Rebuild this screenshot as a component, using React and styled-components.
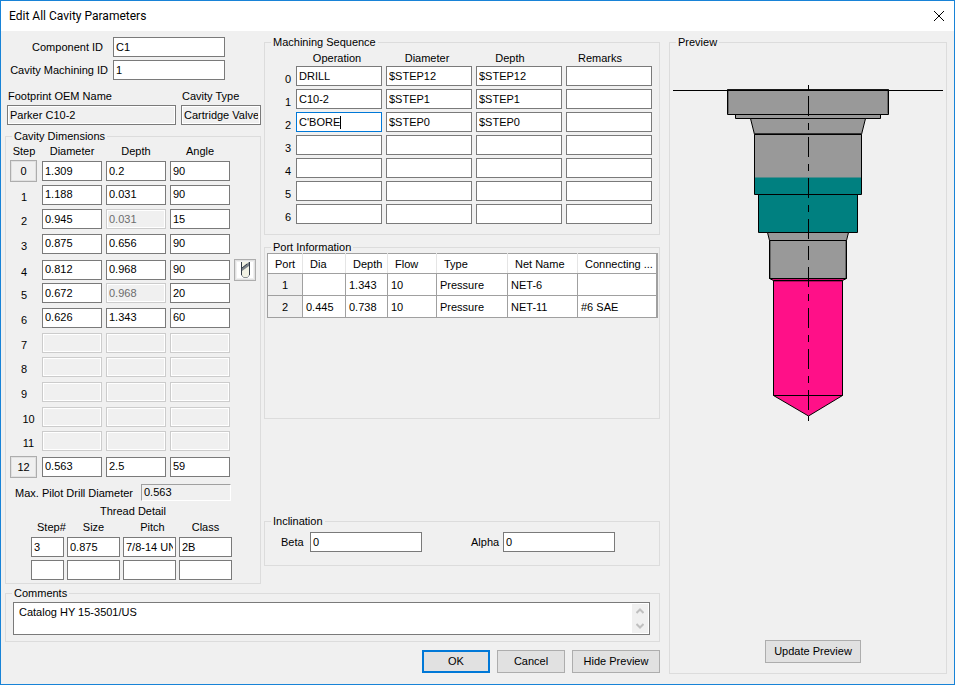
import React, { useEffect, useRef } from "react";
import styled, { createGlobalStyle } from "styled-components";

const GlobalStyle = createGlobalStyle`
  * {
    box-sizing: border-box;
  }

  body {
    margin: 0;
    background: #f0f0f0;
    color: #000;
    font-family: "Liberation Sans", Arial, sans-serif;
    font-size: 11px;
    line-height: 14px;
  }

  input,
  button,
  textarea {
    font: inherit;
    color: inherit;
    margin: 0;
  }
`;

const Dialog = styled.form`
  display: flex;
  flex-direction: column;
  min-height: 100vh;
  border: 1px solid #1883d7;
`;

const TitleBar = styled.header`
  display: flex;
  align-items: center;
  justify-content: space-between;
  height: 30px;
  padding: 0 9px 0 8px;
  background: #fff;
`;

const Title = styled.h1`
  margin: 0;
  font-family: Roboto, "Noto Sans", sans-serif;
  font-size: 12px;
  font-weight: 400;
`;

const CloseButton = styled.button`
  display: flex;
  padding: 0;
  border: 0;
  background: none;
`;

const Body = styled.div`
  display: grid;
  grid-template-columns: minmax(0, 655fr) minmax(0, 278fr);
  flex: 1;
  align-items: start;
  gap: 9px;
  padding: 5px 7px 10px 4px;
`;

const Main = styled.main`
  display: flex;
  flex-direction: column;
  min-width: 0;
`;

const Columns = styled.div`
  display: grid;
  grid-template-columns: 256px minmax(0, 1fr);
  gap: 3px;
`;

const Column = styled.div`
  display: flex;
  flex-direction: column;
  min-width: 0;
`;

const Group = styled.fieldset`
  min-width: 0;
  margin: 0;
  padding: 0;
  border: 1px solid #dcdcdc;
`;

const Legend = styled.legend`
  margin-left: 6px;
  padding: 0 2px;
  line-height: 12px;
`;

const TextBox = styled.input`
  width: 100%;
  min-width: 0;
  height: 20px;
  padding: 0 2px 1px;
  border: 1px solid #7a7a7a;
  border-radius: 0;
  background: #fff;
  outline: none;

  &:focus {
    border-color: #0078d7;
  }

  &:read-only {
    background: #f0f0f0;
    box-shadow: inset 0 0 0 1px #fff;
  }

  &:disabled {
    border-color: #ccc;
    background: #f0f0f0;
    color: #6d6d6d;
    box-shadow: inset 0 0 0 1px #fff;
  }
`;

const IdFields = styled.div`
  display: grid;
  grid-template-columns: 104px 112px;
  gap: 3px 4px;
  padding-top: 1px;
  align-items: center;
`;

const IdLabel = styled.label`
  padding-right: ${(props) => (props.$inset ? "6px" : "1px")};
  text-align: right;
`;

const NameFields = styled.div`
  display: grid;
  grid-template-columns: 169px 80px;
  gap: 2px 5px;
  padding: 9px 0 5px 2px;
`;

const NameLabel = styled.label`
  padding-left: 1px;
`;

const StepHeads = styled.div`
  display: grid;
  grid-template-columns: 28px 60px 60px 60px;
  gap: 4px;
  padding: 2px 0 2px 4px;
  text-align: center;
`;

const StepRows = styled.div`
  display: flex;
  flex-direction: column;
  justify-content: space-between;
  height: 316px;
  padding-left: 4px;
`;

const StepRow = styled.div`
  display: grid;
  grid-template-columns: 28px 60px 60px 60px 22px;
  gap: 4px;
  align-items: center;
  height: 20px;
`;

const StepNumber = styled.span`
  padding: 4px 0 0 ${(props) => (props.$wide ? "9px" : "0")};
  text-align: center;
`;

const StepButton = styled.button`
  width: 27px;
  height: 22px;
  padding: 0;
  border: 1px solid #adadad;
  background: #f0f0f0;
  box-shadow: inset 0 0 0 1px #e1e1e1;
`;

const ToolButton = styled(StepButton)`
  display: flex;
  align-items: center;
  justify-content: center;
  width: 22px;
`;

const PilotRow = styled.div`
  display: flex;
  align-items: center;
  justify-content: space-between;
  padding: 8px 29px 3px 9px;
`;

const PilotValue = styled.output`
  width: 90px;
  height: 17px;
  padding-left: 2px;
  border: 1px solid;
  border-color: #a0a0a0 #fff #fff #a0a0a0;
`;

const ThreadTitle = styled.div`
  padding-bottom: 3px;
  text-align: center;
`;

const ThreadGrid = styled.div`
  display: grid;
  grid-template-columns: 33px 53px 53px 53px;
  gap: 3px;
  padding: 0 25px 3px;
`;

const ThreadHead = styled.div`
  padding-left: ${(props) => (props.$indent ? "6px" : "0")};
  line-height: 13px;
  text-align: center;
`;

const SequenceGrid = styled.div`
  display: grid;
  grid-template-columns: 26px repeat(4, minmax(0, 1fr));
  gap: 3px 4px;
  padding: 3px 7px 10px 1px;
  text-align: center;
`;

const SequenceHead = styled.div`
  height: 12px;
  padding-right: ${(props) => (props.$trail ? "18px" : "4px")};
`;

const SequenceNumber = styled.div`
  padding: 6px 1px 0 0;
  text-align: right;
`;

const ActiveCell = styled.div`
  position: relative;

  input {
    display: block;
    caret-color: transparent;
  }
`;

const Caret = styled.span`
  position: absolute;
  top: 4px;
  left: 44px;
  width: 1px;
  height: 13px;
  background: #000;
`;

const PortGroup = styled(Group)`
  min-height: 178px;
  margin-top: 6px;
`;

const PortTableBox = styled.div`
  padding: 0 1px 0 2px;
`;

const PortTable = styled.table`
  width: 100%;
  table-layout: fixed;
  border-collapse: collapse;
  border: 1px solid #a0a0a0;
  border-right-width: 2px;
  background: #fff;
`;

const PortHead = styled.th`
  height: 20px;
  padding: 0 0 0 7px;
  border-bottom: 1px solid #a0a0a0;
  border-right: 1px solid #e5e5e5;
  font-weight: 400;
  text-align: left;
  white-space: nowrap;
`;

const PortCell = styled.td`
  height: 22px;
  padding: 0 3px;
  border: 1px solid #a0a0a0;
  white-space: nowrap;
`;

const PortNumber = styled(PortCell)`
  background: #f0f0f0;
  text-align: center;
`;

const InclinationGroup = styled(Group)`
  margin-top: auto;
  margin-bottom: 18px;
`;

const InclinationFields = styled.div`
  display: grid;
  grid-template-columns: 25px 112px 41px 28px 112px;
  column-gap: 4px;
  align-items: center;
  padding: 5px 16px 13px;
`;

const AlphaLabel = styled.label`
  grid-column: 4;
`;

const CommentsGroup = styled(Group)`
  margin-top: 3px;
`;

const CommentsBox = styled.div`
  display: flex;
  height: 33px;
  margin: 3px 9px 6px 7px;
  padding: 1px;
  border: 1px solid #7a7a7a;
  background: #fff;
`;

const CommentsText = styled.textarea`
  flex: 1;
  padding: 1px 4px;
  border: 0;
  outline: none;
  resize: none;
  overflow: hidden;
  background: #fff;
`;

const ScrollArrows = styled.div`
  display: flex;
  flex-direction: column;
  width: 16px;
  background: #f0f0f0;
`;

const ScrollArrow = styled.button`
  display: flex;
  flex: 1;
  align-items: center;
  justify-content: center;
  padding: 0;
  border: 0;
  background: none;
`;

const Actions = styled.footer`
  display: flex;
  justify-content: flex-end;
  gap: 7px;
  padding-top: 8px;
`;

const Button = styled.button`
  width: ${(props) => props.$width || "68px"};
  height: 23px;
  padding: 0 0 2px;
  border: ${(props) => (props.$primary ? "2px solid #0078d7" : "1px solid #adadad")};
  background: #e1e1e1;
`;

const PreviewGroup = styled(Group)`
  display: flex;
  flex-direction: column;
  align-self: stretch;
`;

const Drawing = styled.svg`
  display: block;
  width: 100%;
  padding: 32px 3px 0;
`;

const PreviewActions = styled.div`
  display: flex;
  justify-content: center;
  margin-top: auto;
  padding: 0 0 10px 10px;
`;

const steps = [
  { diameter: "1.309", depth: "0.2", angle: "90", button: true },
  { diameter: "1.188", depth: "0.031", angle: "90" },
  { diameter: "0.945", depth: "0.031", angle: "15", depthLocked: true },
  { diameter: "0.875", depth: "0.656", angle: "90" },
  { diameter: "0.812", depth: "0.968", angle: "90", tool: true },
  { diameter: "0.672", depth: "0.968", angle: "20", depthLocked: true },
  { diameter: "0.626", depth: "1.343", angle: "60" },
  { unused: true },
  { unused: true },
  { unused: true },
  { unused: true },
  { unused: true },
  { diameter: "0.563", depth: "2.5", angle: "59", button: true },
];

const threads = [
  ["3", "0.875", "7/8-14 UNF", "2B"],
  ["", "", "", ""],
];
const threadHeads = ["Step#", "Size", "Pitch", "Class"];

const sequenceHeads = ["Operation", "Diameter", "Depth", "Remarks"];
const sequence = [
  ["DRILL", "$STEP12", "$STEP12", ""],
  ["C10-2", "$STEP1", "$STEP1", ""],
  ["C'BORE", "$STEP0", "$STEP0", ""],
  ["", "", "", ""],
  ["", "", "", ""],
  ["", "", "", ""],
  ["", "", "", ""],
];

const portHeads = ["Port", "Dia", "Depth", "Flow", "Type", "Net Name", "Connecting ..."];
const portWidths = [35, 43, 42, 49, 71, 70, undefined];
const ports = [
  ["1", "", "1.343", "10", "Pressure", "NET-6", ""],
  ["2", "0.445", "0.738", "10", "Pressure", "NET-11", "#6 SAE"],
];

const CavityDrawing = () => (
  <Drawing viewBox="673 80 270 345" role="img" aria-label="Cavity section">
    <g stroke="#000" fill="#999">
      <path d="M727.5 89.5H888.5V114.5H727.5Z" />
      <path d="M728.5 91V113.5M887.5 91V113.5M728 89.5H888" stroke="#333" strokeOpacity="0.5" />
      <path d="M735.5 114.5H880.5V118.5H735.5Z" />
      <path d="M750.5 118.5H865.5L861.5 134.5H754.5Z" />
      <path d="M754.5 134.5H861.5V194.5H754.5Z" />
      <path d="M755 133.5H861" stroke="#333" />
      <path d="M755 177.5H861V194H755Z" fill="#008080" stroke="none" />
      <path d="M758.5 194.5H857.5V232.5H758.5Z" fill="#008080" />
      <path d="M767.5 232.5H848.5L846.5 240.5H769.5Z" />
      <path d="M769.5 240.5H846.5V278.5H769.5Z" />
      <path d="M770.5 241V278M845.5 241V278" stroke="#333" strokeOpacity="0.5" />
      <path d="M769.5 278.5H846.5L842.5 280.5H773.5Z" fill="#cc0d6c" />
      <path d="M773.5 280.5H842.5V395.5H773.5Z" fill="#ff1088" />
      <path d="M774 281.5H842" stroke="#7a0841" strokeOpacity="0.6" />
      <path d="M773.5 395.5H842.5L808.5 416Z" fill="#ff1088" />
      <path d="M673 90.5H943" />
      <path d="M808.5 85V90M808.5 96V116M808.5 123V130M808.5 137V157M808.5 164V171M808.5 178V198M808.5 205V212M808.5 219V239M808.5 246V260M808.5 267V287M808.5 294V301M808.5 308V328M808.5 335V342M808.5 349V369M808.5 376V383M808.5 390V410M808.5 416V421" />
    </g>
  </Drawing>
);

const DrillIcon = () => (
  <svg width="16" height="16" viewBox="0 0 16 16">
    <path d="M0 0H16V16H0Z" fill="#fff" />
    <path d="M4 0H12V13L10 15H6L4 13Z" fill="#f2f2e4" />
    <path d="M4.500 0V13M12.500 0V13" fill="none" stroke="#333c48" />
    <path d="M4.500 13L6.500 15.500H10.500L12.500 13" fill="none" stroke="#8b9094" />
    <path d="M5 6L12 0V4L5 9Z" fill="#7b8288" />
    <path d="M5 6L10 2" stroke="#333c48" />
  </svg>
);

const App = () => {
  const activeField = useRef(null);

  useEffect(() => {
    activeField.current.focus();
  }, []);

  return (
    <>
      <GlobalStyle />
      <Dialog onSubmit={(e) => e.preventDefault()}>
        <TitleBar>
          <Title>Edit All Cavity Parameters</Title>
          <CloseButton type="button" aria-label="Close">
            <svg width="12" height="12" viewBox="0 0 12 12">
              <path d="M1 1L11 11M11 1L1 11" stroke="#000" />
            </svg>
          </CloseButton>
        </TitleBar>
        <Body>
          <Main>
            <Columns>
              <Column>
                <IdFields>
                  <IdLabel htmlFor="componentId" $inset>
                    Component ID
                  </IdLabel>
                  <TextBox id="componentId" defaultValue="C1" />
                  <IdLabel htmlFor="machiningId">Cavity Machining ID</IdLabel>
                  <TextBox id="machiningId" defaultValue="1" />
                </IdFields>
                <NameFields>
                  <NameLabel htmlFor="footprint">Footprint OEM Name</NameLabel>
                  <NameLabel htmlFor="cavityType">Cavity Type</NameLabel>
                  <TextBox id="footprint" readOnly defaultValue="Parker C10-2" />
                  <TextBox id="cavityType" readOnly defaultValue="Cartridge Valve" />
                </NameFields>
                <Group>
                  <Legend>Cavity Dimensions</Legend>
                  <StepHeads>
                    <span>Step</span>
                    <span>Diameter</span>
                    <span>Depth</span>
                    <span>Angle</span>
                  </StepHeads>
                  <StepRows>
                    {steps.map((step, i) => (
                      <StepRow key={i}>
                        {step.button ? (
                          <StepButton type="button">{i}</StepButton>
                        ) : (
                          <StepNumber $wide={i > 9}>{i}</StepNumber>
                        )}
                        <TextBox
                          aria-label={`Step ${i} diameter`}
                          defaultValue={step.diameter}
                          disabled={step.unused}
                        />
                        <TextBox
                          aria-label={`Step ${i} depth`}
                          defaultValue={step.depth}
                          disabled={step.unused || step.depthLocked}
                        />
                        <TextBox
                          aria-label={`Step ${i} angle`}
                          defaultValue={step.angle}
                          disabled={step.unused}
                        />
                        {step.tool && (
                          <ToolButton type="button" aria-label="Drill tool">
                            <DrillIcon />
                          </ToolButton>
                        )}
                      </StepRow>
                    ))}
                  </StepRows>
                  <PilotRow>
                    <label htmlFor="pilot">Max. Pilot Drill Diameter</label>
                    <PilotValue id="pilot">0.563</PilotValue>
                  </PilotRow>
                  <ThreadTitle>Thread Detail</ThreadTitle>
                  <ThreadGrid>
                    {threadHeads.map((head, i) => (
                      <ThreadHead key={head} $indent={i % 2 === 0}>
                        {head}
                      </ThreadHead>
                    ))}
                    {threads.map((row, r) =>
                      row.map((value, c) => (
                        <TextBox
                          key={`${r}-${c}`}
                          aria-label={`Thread ${r + 1} ${threadHeads[c]}`}
                          defaultValue={value}
                        />
                      ))
                    )}
                  </ThreadGrid>
                </Group>
              </Column>

              <Column>
                <Group>
                  <Legend>Machining Sequence</Legend>
                  <SequenceGrid>
                    <span />
                    {sequenceHeads.map((head, i) => (
                      <SequenceHead key={head} $trail={i > 1}>
                        {head}
                      </SequenceHead>
                    ))}
                    {sequence.map((row, r) => (
                      <React.Fragment key={r}>
                        <SequenceNumber>{r}</SequenceNumber>
                        {row.map((value, c) =>
                          r === 2 && c === 0 ? (
                            <ActiveCell key={c}>
                              <TextBox
                                ref={activeField}
                                aria-label={`${sequenceHeads[c]} ${r}`}
                                defaultValue={value}
                              />
                              <Caret />
                            </ActiveCell>
                          ) : (
                            <TextBox
                              key={c}
                              aria-label={`${sequenceHeads[c]} ${r}`}
                              defaultValue={value}
                            />
                          )
                        )}
                      </React.Fragment>
                    ))}
                  </SequenceGrid>
                </Group>

                <PortGroup>
                  <Legend>Port Information</Legend>
                  <PortTableBox>
                    <PortTable>
                      <colgroup>
                        {portWidths.map((width, i) => (
                          <col key={i} width={width} />
                        ))}
                      </colgroup>
                      <thead>
                        <tr>
                          {portHeads.map((head) => (
                            <PortHead key={head}>{head}</PortHead>
                          ))}
                        </tr>
                      </thead>
                      <tbody>
                        {ports.map(([number, ...cells]) => (
                          <tr key={number}>
                            <PortNumber>{number}</PortNumber>
                            {cells.map((cell, i) => (
                              <PortCell key={i}>{cell}</PortCell>
                            ))}
                          </tr>
                        ))}
                      </tbody>
                    </PortTable>
                  </PortTableBox>
                </PortGroup>

                <InclinationGroup>
                  <Legend>Inclination</Legend>
                  <InclinationFields>
                    <label htmlFor="beta">Beta</label>
                    <TextBox id="beta" defaultValue="0" />
                    <AlphaLabel htmlFor="alpha">Alpha</AlphaLabel>
                    <TextBox id="alpha" defaultValue="0" />
                  </InclinationFields>
                </InclinationGroup>
              </Column>
            </Columns>

            <CommentsGroup>
              <Legend>Comments</Legend>
              <CommentsBox>
                <CommentsText aria-label="Comments" defaultValue="Catalog HY 15-3501/US" />
                <ScrollArrows>
                  <ScrollArrow type="button" aria-label="Scroll up">
                    <svg width="8" height="6" viewBox="0 0 8 6">
                      <path d="M0.500 5L4 1.500L7.500 5" fill="none" stroke="#bfbfbf" strokeWidth="2" />
                    </svg>
                  </ScrollArrow>
                  <ScrollArrow type="button" aria-label="Scroll down">
                    <svg width="8" height="6" viewBox="0 0 8 6">
                      <path d="M0.500 1L4 4.500L7.500 1" fill="none" stroke="#bfbfbf" strokeWidth="2" />
                    </svg>
                  </ScrollArrow>
                </ScrollArrows>
              </CommentsBox>
            </CommentsGroup>

            <Actions>
              <Button type="submit" $primary>
                OK
              </Button>
              <Button type="button">Cancel</Button>
              <Button type="button" $width="88px">
                Hide Preview
              </Button>
            </Actions>
          </Main>

          <PreviewGroup>
            <Legend>Preview</Legend>
            <CavityDrawing />
            <PreviewActions>
              <Button type="button" $width="96px">
                Update Preview
              </Button>
            </PreviewActions>
          </PreviewGroup>
        </Body>
      </Dialog>
    </>
  );
};

export default App;
